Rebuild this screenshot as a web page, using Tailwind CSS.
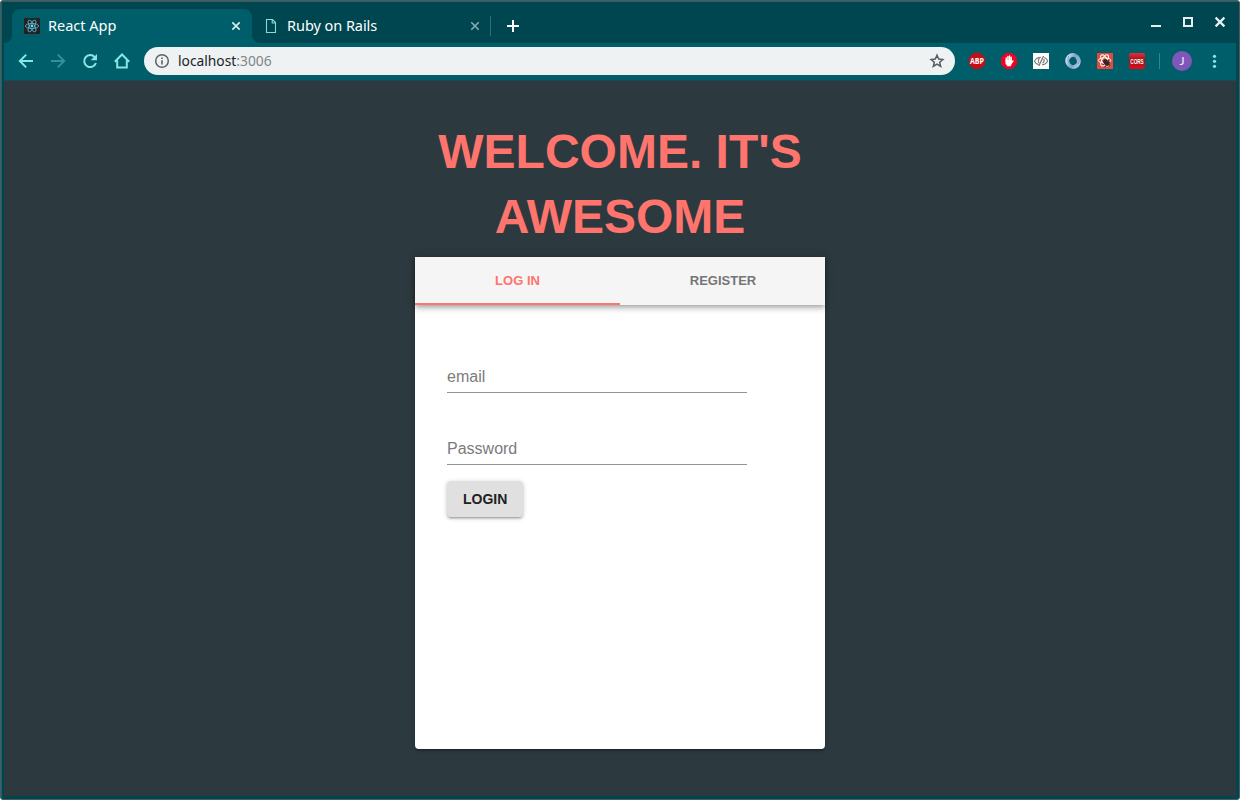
<!DOCTYPE html>
<html lang="en">
<head>
<meta charset="utf-8">
<title>React App</title>
<script src="https://cdn.jsdelivr.net/npm/@tailwindcss/browser@4"></script>
</head>
<body class="w-[1240px] h-[800px] overflow-hidden bg-white font-['Liberation_Sans',Arial,sans-serif]">
<div class="w-full h-full flex flex-col rounded-[3px] overflow-hidden bg-[#004650] border-[#545759] border-t border-x border-b">
  <div class="grow flex flex-col border-t border-t-[#27646c] border-l border-l-[#186671] pl-[2px] pr-[3px] pb-[3px] min-h-0">

    <!-- Tab strip -->
    <div class="h-[41px] shrink-0 flex items-end pl-[8px] font-['Noto_Sans',sans-serif] text-white">
      <div class="relative w-[240px] h-[34px] bg-[#005d6a] rounded-t-[8px] flex items-center pl-[12px] pr-[10px]">
        <svg class="absolute -left-[8px] bottom-0" width="8" height="8"><path d="M8 0V8H0A8 8 0 0 0 8 0Z" fill="#005d6a"/></svg>
        <svg class="absolute -right-[8px] bottom-0" width="8" height="8"><path d="M0 0V8H8A8 8 0 0 1 0 0Z" fill="#005d6a"/></svg>
        <svg width="16" height="16" viewBox="0 0 16 16"><rect width="16" height="16" rx="1" fill="#222"/><g fill="none" stroke="#61bcd6" stroke-width=".8"><ellipse cx="8" cy="8" rx="6.6" ry="2.5"/><ellipse cx="8" cy="8" rx="6.6" ry="2.5" transform="rotate(60 8 8)"/><ellipse cx="8" cy="8" rx="6.6" ry="2.5" transform="rotate(120 8 8)"/></g><circle cx="8" cy="8" r="1.4" fill="#61dafb"/></svg>
        <span class="ml-[8px] pb-[2px] text-[14.5px] leading-5 grow whitespace-nowrap">React App</span>
        <svg width="12" height="12" viewBox="0 0 12 12" stroke="#d2eef0" stroke-width="1.7"><path d="M2.3 2.3L9.7 9.7M9.7 2.3L2.3 9.7"/></svg>
      </div>
      <div class="w-[238px] h-[34px] flex items-center pl-[13px] pr-[9px]">
        <svg width="12" height="16" viewBox="0 0 12 16" fill="none" stroke="#82dcdc" stroke-width="1.1"><path d="M1.5 1.5H7.5L10.5 4.5V14.5H1.5ZM7.2 1.5V5H10.5"/></svg>
        <span class="ml-[10px] pb-[2px] text-[14.5px] tracking-[-0.05px] leading-5 grow whitespace-nowrap">Ruby on Rails</span>
        <svg width="12" height="12" viewBox="0 0 12 12" stroke="#85aeb2" stroke-width="1.6"><path d="M2.3 2.3L9.7 9.7M9.7 2.3L2.3 9.7"/></svg>
      </div>
      <div class="w-px h-5 mb-[7px] bg-[#326d74]"></div>
      <svg class="ml-[15px] mb-[10px]" width="14" height="14" viewBox="0 0 14 14" stroke="#fff" stroke-width="2"><path d="M1 7H13M7 1V13"/></svg>
      <div class="grow"></div>
      <div class="flex items-center gap-[16px] mr-[8px] mb-[13px]">
        <svg width="16" height="16" viewBox="0 0 16 16"><path d="M3 11H13V13H3Z" fill="#e8eef0"/></svg>
        <svg width="16" height="16" viewBox="0 0 16 16"><path d="M4 4H12V12H4Z" fill="none" stroke="#e8eef0" stroke-width="2"/></svg>
        <svg width="16" height="16" viewBox="0 0 16 16"><path d="M3.6 3.6L12.4 12.4M12.4 3.6L3.6 12.4" stroke="#e8eef0" stroke-width="2.2"/></svg>
      </div>
    </div>

    <!-- Toolbar -->
    <div class="h-[38px] shrink-0 bg-[#005d6a] border-b border-b-[#174a54] flex items-center pb-px pl-[14px] pr-[14px]">
      <div class="flex gap-[16px] items-center">
        <svg width="16" height="16" viewBox="0 0 16 16" fill="none" stroke="#83e9e7" stroke-width="2"><path d="M15 8H2.4M8.2 1.6L1.8 8L8.2 14.4"/></svg>
        <svg width="16" height="16" viewBox="0 0 16 16" fill="none" stroke="#31909a" stroke-width="2"><path d="M1 8H13.6M7.8 1.6L14.2 8L7.8 14.4"/></svg>
        <svg width="16" height="16" viewBox="0 0 16 16"><path d="M12.7 4.1A6 6 0 1 0 13.9 10" fill="none" stroke="#83e9e7" stroke-width="2"/><path d="M15 1V7.3H8.7Z" fill="#83e9e7"/></svg>
        <svg width="16" height="16" viewBox="0 0 16 16" fill="none" stroke="#83e9e7" stroke-width="2"><path d="M.8 8.7L8 1.5L15.2 8.7M3.2 7.5V14.5H12.8V7.5"/></svg>
      </div>
      <div class="ml-[14px] w-[811px] h-[28px] rounded-full bg-[#eef2f3] flex items-center pl-[10px] pr-[10px]">
        <svg width="16" height="16" viewBox="0 0 16 16"><circle cx="8" cy="8" r="6.3" fill="none" stroke="#5c6266" stroke-width="1.5"/><path d="M7.2 7.2H8.8V11.5H7.2ZM7.2 4.4H8.8V6H7.2Z" fill="#5c6266"/></svg>
        <span class="ml-[8px] grow font-['Noto_Sans',sans-serif] text-[13.8px] leading-5 text-[#202427] whitespace-nowrap">localhost<span class="text-[#80868a]">:3006</span></span>
        <svg width="16" height="16" viewBox="0 0 16 16" fill="none" stroke="#555d62" stroke-width="1.5"><path d="M8 2.2L9.7 6.1L13.9 6.5L10.7 9.3L11.7 13.5L8 11.2L4.3 13.5L5.3 9.3L2.1 6.5L6.3 6.1Z"/></svg>
      </div>
      <div class="flex items-center gap-[16px] ml-[14px]">
        <svg class="overflow-visible" width="16" height="16" viewBox="0 0 16 16"><path d="M4.7 0H11.3L16 4.7V11.3L11.3 16H4.7L0 11.3V4.7Z" fill="#c70d16"/><text x="8" y="11.1" text-anchor="middle" font-family="Open Sans,sans-serif" font-size="8.6" font-weight="700" textLength="14" lengthAdjust="spacingAndGlyphs" fill="#fff">ABP</text></svg>
        <svg width="16" height="16" viewBox="0 0 16 16"><path d="M4.7 0H11.3L16 4.7V11.3L11.3 16H4.7L0 11.3V4.7Z" fill="#eb0424"/><path d="M5.2 8V5M6.9 7.5V3.4M8.6 7.5V3M10.2 8V4.2M10.4 10.2L12 8" stroke="#fff" stroke-width="1.4" stroke-linecap="round"/><path d="M4.5 7H10.9V10.5L9.7 13.3H6.4L4.5 10.8Z" fill="#fff"/></svg>
        <svg width="16" height="16" viewBox="0 0 16 16"><rect width="16" height="16" fill="#fff"/><g fill="none" stroke="#777" stroke-width="1.1"><path d="M8 4.2C4.8 4.2 2.5 6 1.4 8.2C2.5 10.4 4 11.3 5.5 11.6M11.3 4.6C13 5.2 14 6.5 14.7 8C13.5 10.3 11.5 11.6 9 11.8M6.6 5.2C5 6.4 4.9 8.8 6.2 10.2M10.9 6C11.6 8 10.9 9.3 9.6 10.2"/><path d="M10.6 3L5.8 13" stroke-width="1.3"/></g></svg>
        <svg width="16" height="16" viewBox="0 0 16 16"><defs><linearGradient id="ring" x1="0" y1="0" x2="1" y2="1"><stop offset="0" stop-color="#d9e8f5"/><stop offset=".5" stop-color="#7ba3cf"/><stop offset="1" stop-color="#bdd0e6"/></linearGradient></defs><ellipse cx="8" cy="8" rx="5.7" ry="6" transform="rotate(-20 8 8)" fill="none" stroke="url(#ring)" stroke-width="3.9"/><path d="M3.8 2.8C1.5 7.5 4.2 12.5 8.8 13.4M10 1.5C14.4 3 14.8 8 13 11.5" fill="none" stroke="#7c9fc8" stroke-width="1"/></svg>
        <svg width="16" height="16" viewBox="0 0 16 16"><rect width="16" height="16" fill="#df4b3d"/><g fill="none" stroke="#fff" stroke-width="1"><ellipse cx="7.6" cy="7.4" rx="6.2" ry="2.6"/><ellipse cx="7.6" cy="7.4" rx="6.2" ry="2.6" transform="rotate(60 7.6 7.4)"/><ellipse cx="7.6" cy="7.4" rx="6.2" ry="2.6" transform="rotate(120 7.6 7.4)"/></g><ellipse cx="9.3" cy="9.5" rx="2.5" ry="3.7" transform="rotate(-40 9.3 9.5)" fill="#3a2422"/><path d="M5.5 8L13 12.5M11.8 6.5L8 14.3M6 11.5L13 9" stroke="#3a2422" stroke-width="1"/></svg>
        <svg class="overflow-visible" width="16" height="16" viewBox="0 0 16 16"><defs><linearGradient id="cors" x1="0" y1="0" x2="0" y2="1"><stop offset="0" stop-color="#e0303a"/><stop offset=".5" stop-color="#9c0d14"/><stop offset=".75" stop-color="#c60f1b"/><stop offset="1" stop-color="#d5101e"/></linearGradient></defs><rect width="16" height="16" rx="2" fill="url(#cors)"/><text x="8" y="10.5" text-anchor="middle" font-family="Liberation Sans,sans-serif" font-size="8" font-weight="700" textLength="13.4" lengthAdjust="spacingAndGlyphs" fill="#fff">CORS</text></svg>
      </div>
      <div class="w-px h-4 ml-[14px] bg-[#2b8992]"></div>
      <div class="ml-[12px] w-5 h-5 rounded-full bg-[#7e57b9] text-[#f3effa] flex items-center justify-center font-['Lato',sans-serif] text-[12px] leading-none">J</div>
      <svg class="ml-[14px]" width="16" height="16" viewBox="0 0 16 16" fill="#83e9e7"><circle cx="8.5" cy="3.3" r="1.6"/><circle cx="8.5" cy="8.3" r="1.6"/><circle cx="8.5" cy="13.3" r="1.6"/></svg>
    </div>

    <!-- Page -->
    <main class="grow bg-[#2c3a3f] flex flex-col items-center pt-[38px]">
      <h1 class="w-[410px] text-center text-[48px] leading-[65px] font-bold text-[#ff746d] uppercase">Welcome. It's<br>awesome</h1>
      <section class="mt-[8px] w-[410px] h-[492px] bg-white rounded-b-[4px] shadow-[0_1px_5px_rgba(0,0,0,0.2),0_2px_2px_rgba(0,0,0,0.14),0_3px_1px_-2px_rgba(0,0,0,0.12)]">
        <div class="h-[48px] flex bg-[#f5f5f5] text-[13px] font-bold uppercase text-center leading-[48px] shadow-[0_2px_4px_-1px_rgba(0,0,0,0.2),0_4px_5px_rgba(0,0,0,0.14),0_1px_10px_rgba(0,0,0,0.12)]">
          <div class="w-1/2 h-full text-[#ff746d] border-b-2 border-[#ff746d]">Log in</div>
          <div class="w-1/2 h-full text-[#757575] pl-px">Register</div>
        </div>
        <form class="pl-[32px] pt-[56px] flex flex-col items-start">
          <div class="w-[300px] h-[32px] border-b border-[#949494] text-[16px] leading-[31px] text-[#7b7b7b]">email</div>
          <div class="mt-[40px] w-[300px] h-[32px] border-b border-[#949494] text-[16px] leading-[31px] text-[#7b7b7b]">Password</div>
          <button type="button" class="mt-[16px] h-[36px] px-[16px] rounded-[4px] bg-[#e0e0e0] text-[14px] font-bold text-[#212121] shadow-[0_1px_5px_rgba(0,0,0,0.2),0_2px_2px_rgba(0,0,0,0.14),0_3px_1px_-2px_rgba(0,0,0,0.12)]">LOGIN</button>
        </form>
      </section>
    </main>
  </div>
</div>
</body>
</html>
